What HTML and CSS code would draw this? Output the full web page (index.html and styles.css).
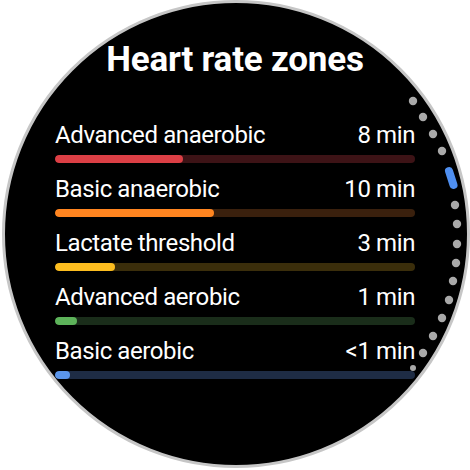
FILE: index.html
```html
<!DOCTYPE html>
<html lang="en">
<head>
    <meta charset="UTF-8">
    <meta name="viewport" content="width=device-width, initial-scale=1.0">
    <title>Heart rate zones</title>
    <link rel="stylesheet" href="styles.css">
</head>
<body>

<div class="watch">
    <h1 class="title">Heart rate zones</h1>

    <ul class="zones">
        <li class="zone zone-red">
            <div class="zone-head"><span>Advanced anaerobic</span><span>8 min</span></div>
            <div class="track"><div class="fill" style="width: 35.6%"></div></div>
        </li>
        <li class="zone zone-orange">
            <div class="zone-head"><span>Basic anaerobic</span><span>10 min</span></div>
            <div class="track"><div class="fill" style="width: 44.2%"></div></div>
        </li>
        <li class="zone zone-yellow">
            <div class="zone-head"><span>Lactate threshold</span><span>3 min</span></div>
            <div class="track"><div class="fill" style="width: 16.7%"></div></div>
        </li>
        <li class="zone zone-green">
            <div class="zone-head"><span>Advanced aerobic</span><span>1 min</span></div>
            <div class="track"><div class="fill" style="width: 6.1%"></div></div>
        </li>
        <li class="zone zone-blue">
            <div class="zone-head"><span>Basic aerobic</span><span>&lt;1 min</span></div>
            <div class="track"><div class="fill" style="width: 4.2%"></div></div>
        </li>
    </ul>

    <!-- scroll indicator along the right edge -->
    <svg class="scroll" viewBox="2 0 468 468" width="468" height="468">
        <g fill="#a9a9a9">
            <circle cx="413" cy="101" r="4.2"/>
            <circle cx="423" cy="117" r="4.2"/>
            <circle cx="433" cy="134" r="4.2"/>
            <circle cx="442" cy="151" r="4.2"/>
            <circle cx="455" cy="205" r="4.2"/>
            <circle cx="457" cy="224" r="4.2"/>
            <circle cx="457" cy="244" r="4.2"/>
            <circle cx="456" cy="263" r="4.2"/>
            <circle cx="453" cy="281" r="4.2"/>
            <circle cx="449" cy="300" r="4.2"/>
            <circle cx="442" cy="318" r="4.2"/>
            <circle cx="433" cy="336" r="4.2"/>
            <circle cx="423" cy="353" r="4.2"/>
            <circle cx="413" cy="368" r="3"/>
        </g>
        <line x1="449" y1="171" x2="453.5" y2="185" stroke="#4f8ff0" stroke-width="8" stroke-linecap="round"/>
    </svg>
</div>

</body>
</html>
```

FILE: styles.css
```css
body {
    margin: 0;
    background-color: #fff;
    font-family: Roboto, "Noto Sans", sans-serif;
}
.watch {
    position: relative;
    box-sizing: border-box;
    width: 468px;
    height: 468px;
    margin-left: 2px;
    padding: 35px 52px 0 50px;
    border: 3px solid #c6c6c6;
    border-radius: 50%;
    background-color: #000;
    color: #fff;
}
.title {
    margin: 0 0 38px;
    font-size: 35px;
    line-height: 44px;
    font-weight: 700;
    letter-spacing: -0.2px;
    text-align: center;
}
.zones {
    list-style: none;
    margin: 0;
    padding: 0;
    display: flex;
    flex-direction: column;
    gap: 11px;
}
.zone-head {
    display: flex;
    justify-content: space-between;
    font-size: 24px;
    line-height: 30px;
    letter-spacing: -0.4px;
}
.track {
    height: 8px;
    margin-top: 5px;
    border-radius: 4px;
    overflow: hidden;
}
.fill {
    height: 100%;
    border-radius: 4px;
}
.zone-red .track { background-color: #3d1316; }
.zone-red .fill { background-color: #dc3f45; }
.zone-orange .track { background-color: #3a200d; }
.zone-orange .fill { background-color: #ff8520; }
.zone-yellow .track { background-color: #3b2e0b; }
.zone-yellow .fill { background-color: #fcbd1f; }
.zone-green .track { background-color: #1a2d1a; }
.zone-green .fill { background-color: #5db35a; }
.zone-blue .track { background-color: #1e2c44; }
.zone-blue .fill { background-color: #5b95ea; }
.scroll {
    position: absolute;
    top: -3px;
    left: -3px;
}
```
